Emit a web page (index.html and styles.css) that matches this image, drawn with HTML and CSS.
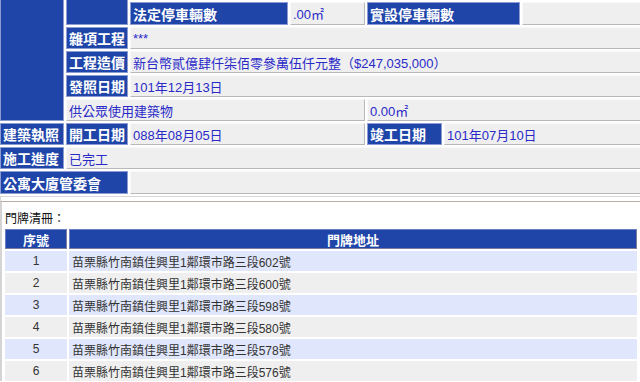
FILE: index.html
```html
<!DOCTYPE html>
<html lang="zh-Hant">
<head>
<meta charset="utf-8">
<title>建築執照</title>
<link rel="stylesheet" href="styles.css">
</head>
<body>
<div class="page">
  <div class="info">
    <div class="cell lab c1-top"></div>
    <div class="cell lab c2-top"></div>
    <div class="cell val s-a"></div>
    <div class="cell val s-b"></div>
    <div class="cell val s-c"></div>
    <div class="cell val s-d"></div>
    <div class="cell blank s-e"></div>

    <div class="cell lab ra-c3">法定停車輛數</div>
    <div class="cell val ra-c4">.00㎡</div>
    <div class="cell lab ra-c56">實設停車輛數</div>
    <div class="cell val ra-c7"></div>

    <div class="cell lab rb-c2">雜項工程</div>
    <div class="cell val rb-rest">***</div>

    <div class="cell lab rc-c2">工程造價</div>
    <div class="cell val rc-rest">新台幣貳億肆仟柒佰零參萬伍仟元整（$247,035,000）</div>

    <div class="cell lab rd-c2">發照日期</div>
    <div class="cell val rd-rest">101年12月13日</div>

    <div class="cell val re-c24">供公眾使用建築物</div>
    <div class="cell val re-c57">0.00㎡</div>

    <div class="cell lab rf-c1">建築執照</div>
    <div class="cell lab rf-c2">開工日期</div>
    <div class="cell val rf-c34">088年08月05日</div>
    <div class="cell lab rf-c5">竣工日期</div>
    <div class="cell val rf-c67">101年07月10日</div>

    <div class="cell lab rg-c1">施工進度</div>
    <div class="cell val rg-rest">已完工</div>

    <div class="cell lab rh-c12">公寓大廈管委會</div>
    <div class="cell val rh-rest"></div>

    <div class="cell blank ri-all"></div>
  </div>

  <div class="lower">
    <div class="caption">門牌清冊：</div>
    <div class="list">
      <div class="hd">序號</div>
      <div class="hd">門牌地址</div>

      <div class="no odd">1</div>
      <div class="addr odd">苗栗縣竹南鎮佳興里1鄰環市路三段602號</div>
      <div class="no even">2</div>
      <div class="addr even">苗栗縣竹南鎮佳興里1鄰環市路三段600號</div>
      <div class="no odd">3</div>
      <div class="addr odd">苗栗縣竹南鎮佳興里1鄰環市路三段598號</div>
      <div class="no even">4</div>
      <div class="addr even">苗栗縣竹南鎮佳興里1鄰環市路三段580號</div>
      <div class="no odd">5</div>
      <div class="addr odd">苗栗縣竹南鎮佳興里1鄰環市路三段578號</div>
      <div class="no even">6</div>
      <div class="addr even">苗栗縣竹南鎮佳興里1鄰環市路三段576號</div>
    </div>
  </div>
</div>
</body>
</html>
```

FILE: styles.css
```css
html, body {
  margin: 0;
  padding: 0;
  background: #ffffff;
  overflow: hidden;
}

body {
  font-family: "Liberation Sans", "Noto Sans CJK TC", sans-serif;
  font-size: 13px;
}

.page {
  width: 640px;
  height: 382px;
  overflow: hidden;
}

/* ---------- top info table ---------- */
.info {
  display: grid;
  width: 660px;
  grid-template-columns: 64px 62px 158px 75px 75px 76px 1fr;
  grid-template-rows: 20px 23px 22px 22px 22px 22px 22px 22px 23px 6px;
  gap: 2px;
  margin-top: -20px;
  background: #ffffff;
}

.cell {
  box-sizing: border-box;
  display: flex;
  align-items: center;
  padding: 0 2px;
  white-space: nowrap;
  overflow: hidden;
}

.lab {
  background: #1f45a9;
  color: #ffffff;
  font-family: "Noto Sans CJK TC", sans-serif;
  font-size: 14px;
  font-weight: bold;
  border: 1px solid #8d9bd3;
}

.val {
  background: #efefef;
  color: #2a2ac8;
  font-size: 13px;
  border: 1px solid;
  border-color: #f8f8f8 #b8b8b8 #b8b8b8 #f8f8f8;
}

.blank {
  background: #ffffff;
  border: 1px solid;
  border-color: #d8d8d8 #b8b0a0 #b8b0a0 #d8d8d8;
}

/* placements */
.c1-top { grid-column: 1; grid-row: 1 / 7; }
.c2-top { grid-column: 2; grid-row: 1 / 3; }
.s-a { grid-column: 3; grid-row: 1; }
.s-b { grid-column: 4; grid-row: 1; }
.s-c { grid-column: 5; grid-row: 1; }
.s-d { grid-column: 6; grid-row: 1; }
.s-e { grid-column: 7; grid-row: 1; }

.ra-c3 { grid-column: 3; grid-row: 2; }
.ra-c4 { grid-column: 4; grid-row: 2; }
.ra-c56 { grid-column: 5 / 7; grid-row: 2; }
.ra-c7 { grid-column: 7; grid-row: 2; }

.rb-c2 { grid-column: 2; grid-row: 3; }
.rb-rest { grid-column: 3 / 8; grid-row: 3; }

.rc-c2 { grid-column: 2; grid-row: 4; }
.rc-rest { grid-column: 3 / 8; grid-row: 4; }

.rd-c2 { grid-column: 2; grid-row: 5; }
.rd-rest { grid-column: 3 / 8; grid-row: 5; }

.re-c24 { grid-column: 2 / 5; grid-row: 6; }
.re-c57 { grid-column: 5 / 8; grid-row: 6; }

.rf-c1 { grid-column: 1; grid-row: 7; }
.rf-c2 { grid-column: 2; grid-row: 7; }
.rf-c34 { grid-column: 3 / 5; grid-row: 7; }
.rf-c5 { grid-column: 5; grid-row: 7; }
.rf-c67 { grid-column: 6 / 8; grid-row: 7; }

.rg-c1 { grid-column: 1; grid-row: 8; }
.rg-rest { grid-column: 2 / 8; grid-row: 8; }

.rh-c12 { grid-column: 1 / 3; grid-row: 9; }
.rh-rest { grid-column: 3 / 8; grid-row: 9; }

.ri-all { grid-column: 1 / 8; grid-row: 10; }

/* ---------- lower list ---------- */
.lower {
  border-left: 2px solid #d4d4d4;
  padding: 9px 0 0 3px;
}

.caption {
  font-family: "Noto Sans CJK TC", sans-serif;
  font-size: 12px;
  line-height: 14px;
  color: #111111;
  margin-bottom: 4px;
}

.list {
  display: grid;
  width: 632px;
  grid-template-columns: 62px 1fr;
  grid-auto-rows: 20px;
  gap: 2px;
  font-family: "Liberation Sans", "Noto Sans CJK TC", sans-serif;
  font-size: 12px;
  color: #333333;
}

.hd {
  box-sizing: border-box;
  background: #1f45a9;
  color: #ffffff;
  font-family: "Noto Sans CJK TC", sans-serif;
  font-weight: bold;
  font-size: 13px;
  display: flex;
  align-items: center;
  justify-content: center;
  border: 1px solid;
  border-color: #6a7fc6 #7c7c9c #7c7c9c #6a7fc6;
}

.no {
  display: flex;
  align-items: center;
  justify-content: center;
}

.addr {
  display: flex;
  align-items: center;
  padding-left: 3px;
  white-space: nowrap;
}

.odd { background: #e0e6fb; }
.even { background: #efefef; }
```
